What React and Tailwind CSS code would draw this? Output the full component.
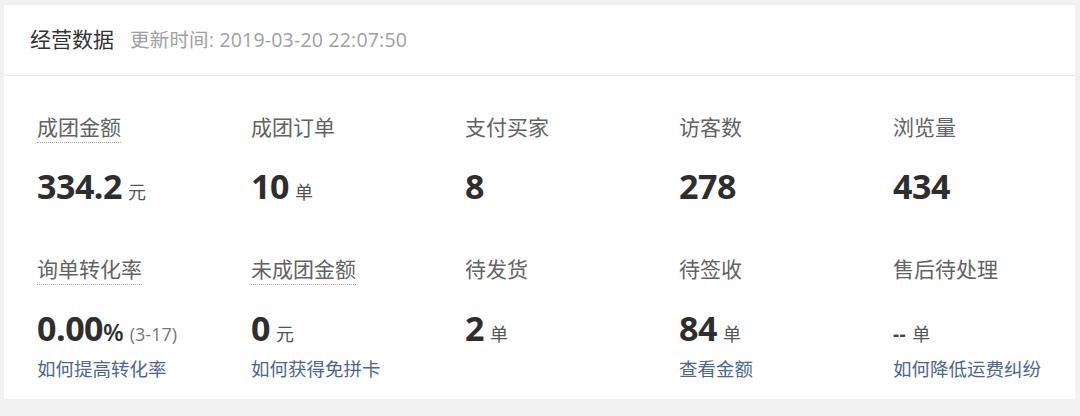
import React from "react";

const cjk = "font-['Liberation_Sans','Noto_Sans_CJK_SC',sans-serif]";
const num = "font-['Open_Sans','Noto_Sans_CJK_SC',sans-serif]";

const rowOne = [
  { label: "成团金额", value: "334.2", unit: "元", dotted: true },
  { label: "成团订单", value: "10", unit: "单" },
  { label: "支付买家", value: "8" },
  { label: "访客数", value: "278" },
  { label: "浏览量", value: "434" },
];

const rowTwo = [
  { label: "询单转化率", value: "0.00", pct: true, extra: "(3-17)", link: "如何提高转化率", dotted: true },
  { label: "未成团金额", value: "0", unit: "元", link: "如何获得免拼卡", dotted: true },
  { label: "待发货", value: "2", unit: "单" },
  { label: "待签收", value: "84", unit: "单", link: "查看金额" },
  { label: "售后待处理", value: "--", unit: "单", link: "如何降低运费纠纷", dash: true },
];

function Stat({ item }) {
  return (
    <div className="flex flex-col items-start">
      <div
        className={`h-[29px] text-[21px] leading-[28px] text-[#636363] ${cjk} ${
          item.dotted ? "border-b border-dotted border-[#aaaaaa]" : ""
        }`}
      >
        {item.label}
      </div>
      <div className="mt-[23px] flex h-[40px] items-baseline">
        <span className={`text-[34px] font-bold leading-[40px] tracking-[-0.5px] text-[#2e2e2e] ${num}`}>
          {item.dash ? <span className="text-[19px] tracking-[0.5px] text-[#444]">--</span> : item.value}
        </span>
        {item.pct && (
          <span className={`text-[24px] font-semibold text-[#2e2e2e] ${num}`}>%</span>
        )}
        {item.extra && (
          <span className={`ml-[6px] text-[18px] text-[#777] ${num}`}>{item.extra}</span>
        )}
        {item.unit && (
          <span className={`ml-[6px] text-[18px] text-[#555] ${cjk}`}>{item.unit}</span>
        )}
      </div>
      {item.link && (
        <div className={`mt-[10px] h-[24px] text-[18.5px] leading-[24px] text-[#4a6791] ${cjk}`}>
          {item.link}
        </div>
      )}
    </div>
  );
}

export default function App() {
  return (
    <div className="h-[416px] w-[1080px] bg-[#f1f1f1] pt-[5px] pl-[4px]">
      <div className="w-[1071px] bg-white">
        <div className="flex h-[71px] items-center border-b border-[#e8e8e8] pl-[26px]">
          <span className={`text-[21px] text-[#333] ${cjk}`}>经营数据</span>
          <span className={`ml-[16px] text-[19.5px] tracking-[0.2px] text-[#a0a0a0] ${num}`}>
            更新时间: 2019-03-20 22:07:50
          </span>
        </div>
        <div className="pt-[38px] pb-[17px] pl-[33px]">
          <div className="grid grid-cols-[repeat(5,214px)]">
            {rowOne.map((it) => (
              <Stat key={it.label} item={it} />
            ))}
          </div>
          <div className="mt-[50px] grid grid-cols-[repeat(5,214px)]">
            {rowTwo.map((it) => (
              <Stat key={it.label} item={it} />
            ))}
          </div>
        </div>
      </div>
    </div>
  );
}
